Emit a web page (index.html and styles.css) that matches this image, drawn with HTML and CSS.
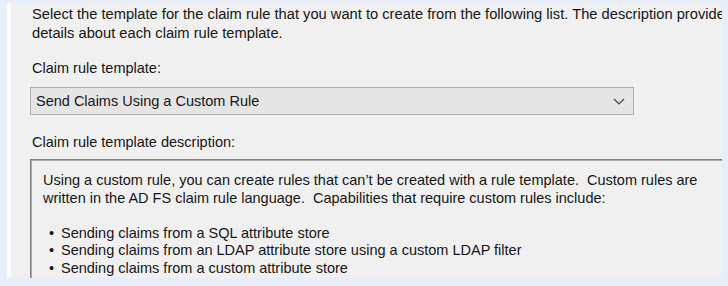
FILE: index.html
```html
<!DOCTYPE html>
<html lang="en">
<head>
    <meta charset="UTF-8">
    <meta name="viewport" content="width=device-width, initial-scale=1.0">
    <title>Claim Rule Template</title>
    <link rel="stylesheet" href="styles.css">
</head>
<body>
    <div class="frame">
        <div class="panel">
            <p class="intro">Select the template for the claim rule that you want to create from the following list. The description provides<br>details about each claim rule template.</p>

            <label class="field-label">Claim rule template:</label>
            <div class="dropdown">
                <span>Send Claims Using a Custom Rule</span>
                <svg class="chevron" width="12" height="7" viewBox="0 0 12 7">
                    <path d="M1 1 L6 6 L11 1" fill="none" stroke="#444" stroke-width="1.2"/>
                </svg>
            </div>

            <label class="field-label desc-label">Claim rule template description:</label>
            <div class="description">
                <p>Using a custom rule, you can create rules that can’t be created with a rule template.&nbsp; Custom rules are<br>written in the AD FS claim rule language.&nbsp; Capabilities that require custom rules include:</p>
                <ul>
                    <li>Sending claims from a SQL attribute store</li>
                    <li>Sending claims from an LDAP attribute store using a custom LDAP filter</li>
                    <li>Sending claims from a custom attribute store</li>
                </ul>
            </div>
        </div>
    </div>
</body>
</html>
```

FILE: styles.css
```css
body {
    margin: 0;
    background: #e8eef9; /* window chrome blue */
    font-family: 'Liberation Sans', Arial, sans-serif;
    font-size: 14.5px;
    color: #161616;
    overflow: hidden;
}
.frame {
    width: 728px;
    height: 286px;
    box-sizing: border-box;
    padding: 3px 6px 8px 7px;
}
.panel {
    height: 275px;
    background: #f0f0f0;
    border-left: 4px solid #fbfbfb;
    padding-left: 19px;
    overflow: hidden;
    white-space: nowrap;
}
.intro {
    margin: 0 0 0 2px;
    padding-top: 2px;
    font-size: 14.7px;
    line-height: 19px;
}
.field-label {
    display: block;
    margin: 16px 0 0 2px;
    line-height: 19px;
}
.dropdown {
    width: 604px;
    height: 28px;
    box-sizing: border-box;
    margin-top: 9px;
    padding: 0 8px 0 5px;
    background: #e5e5e5;
    border: 1px solid #adadad;
    display: flex;
    align-items: center;
    justify-content: space-between;
}
.desc-label {
    margin-top: 18px;
}
.description {
    margin-top: 7px;
    width: 720px;
    height: 140px;
    border-top: 1px solid #7f7f7f;
    border-left: 1px solid #7f7f7f;
    box-shadow: inset 1px 1px 0 #a9a9a9;
    padding: 12px 0 0 12px;
    line-height: 17.5px;
}
.description p {
    margin: 0 0 17.5px 0;
}
.description ul {
    margin: 0;
    padding: 0 0 0 6px;
    list-style: none;
}
.description li::before {
    content: "•";
    display: inline-block;
    width: 12px;
}
```
